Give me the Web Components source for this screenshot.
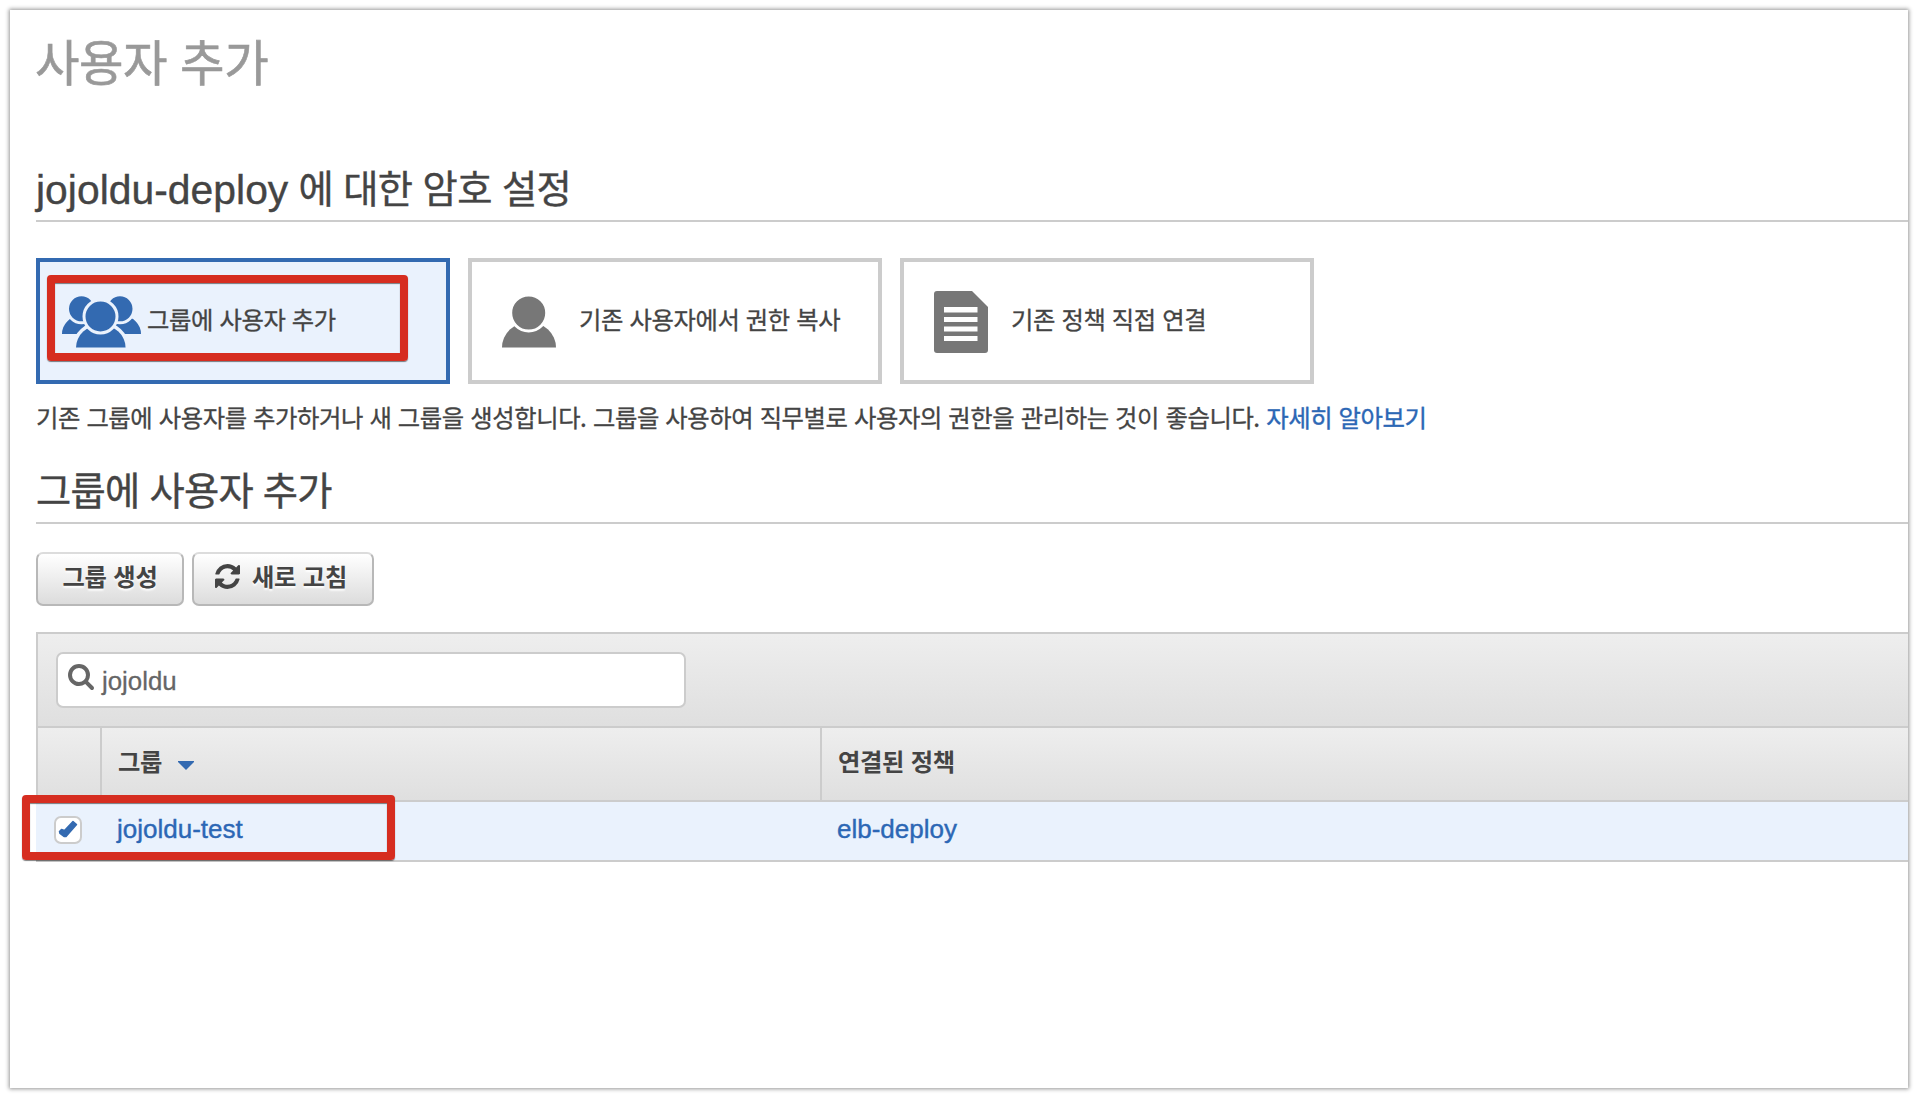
<!DOCTYPE html>
<html lang="ko">
<head>
<meta charset="utf-8">
<title>사용자 추가</title>
<style>
html,body{margin:0;width:1918px;height:1098px;overflow:hidden;background:#fff}
body{font-family:"Liberation Sans","Noto Sans CJK KR",sans-serif;color:#444;box-sizing:border-box;padding:10px}
</style>
</head>
<body>
<iam-page></iam-page>
<script>
const define=(name,html)=>customElements.define(name,class extends HTMLElement{
  constructor(){
    super();
    const t=document.createElement('template');
    t.innerHTML='<style>:host,*{box-sizing:border-box}'+html;
    this.attachShadow({mode:'open'}).append(t.content.cloneNode(true));
  }
});

define('iam-title',`
:host{display:block;font:48.4px/60px "Noto Sans CJK KR",sans-serif;letter-spacing:-.5px;margin-left:-1px;color:#999;white-space:nowrap;-webkit-text-stroke:.6px}
</style><slot></slot>`);

define('iam-heading',`
:host{display:block;height:60px;border-bottom:2px solid #ccc;font:38.3px/54px "Noto Sans CJK KR",sans-serif;letter-spacing:-.6px;color:#444;white-space:nowrap;-webkit-text-stroke:.4px}
::slotted(.latin){font-family:"Liberation Sans",sans-serif;font-size:40.8px;line-height:1;letter-spacing:.04px;vertical-align:-1px}
</style><slot></slot>`);

define('iam-option',`
:host{display:flex;align-items:center;width:414px;height:126px;border:4px solid #ccc;background:#fff;padding-left:30px;font:24.35px/36px "Noto Sans CJK KR",sans-serif;letter-spacing:-.4px;color:#444;white-space:nowrap;-webkit-text-stroke:.3px}
:host([selected]){border-color:#336ab1;background:#eaf2fd;padding-left:22px}
::slotted(svg){flex:none;display:block;margin-top:2px}
.label{margin:0 0 4px var(--gap,23px)}
</style><slot name="icon"></slot><span class="label"><slot></slot></span>`);

define('iam-link',`
:host{color:#2c67b5;-webkit-text-stroke:.4px}
</style><slot></slot>`);

define('iam-button',`
:host{display:flex;align-items:center;justify-content:center;height:54px;border:2px solid #b8b8b8;border-top-color:#dcdcdc;border-radius:7px;background:linear-gradient(#fff,#dcdcdc);font:bold 24.3px/36px "Noto Sans CJK KR",sans-serif;letter-spacing:-.2px;color:#444;text-shadow:0 2px 2px #fff;white-space:nowrap;padding:0 0 7px 0}
:host(.with-icon){padding-right:4px}
::slotted(svg){display:block;margin:1px 12px 0 0}
</style><slot name="icon"></slot><span><slot></slot></span>`);

define('iam-search',`
:host{display:flex;width:630px;height:56px;border:2px solid #ccc;border-radius:7px;background:#fff;padding:10px 0 0 10px;font:25.8px/35px "Liberation Sans",sans-serif;color:#666;-webkit-text-stroke:.3px}
svg{display:block;flex:none;width:26px;height:26px;margin-right:8px}
</style><svg viewBox="0 0 1664 1664"><path fill="#666" d="M1152 704q0-185-131.5-316.5t-316.5-131.5-316.5 131.5-131.5 316.5 131.5 316.5 316.5 131.5 316.5-131.5 131.5-316.5zm512 832q0 53-37.5 90.5t-90.5 37.5q-54 0-90-38l-343-342q-179 124-399 124-143 0-273.5-55.5t-225-150-150-225-55.5-273.5 55.5-273.5 150-225 225-150 273.5-55.5 273.5 55.5 225 150 150 225 55.5 273.5q0 220-124 399l343 343q37 37 37 90z"/></svg><span><slot></slot></span>`);

define('iam-checkbox',`
:host{display:block;width:28px;height:28px;border:2px solid #ccc;border-radius:7px;background:#fff}
svg{display:block}
</style><svg width="24" height="24" viewBox="0 0 24 24"><path d="M3.500 13.500L5.500 11.500L8.500 12.500L17 3.500L20.500 6.500L10 18.500L8 18.500L4 15.500z" fill="#336ab1" stroke="#336ab1" stroke-width="1.500" stroke-linejoin="round"/></svg>`);

define('iam-mark',`
:host{display:block;position:absolute;border:8px solid #d62d20;border-radius:4px;box-shadow:0 1px 1px rgba(0,0,0,.5),inset 0 1px 1px rgba(0,0,0,.5)}
</style>`);

define('iam-table',`
:host{display:block;border-top:2px solid #ccc;white-space:nowrap}
.tools,.head{border-left:2px solid #ccc;border-bottom:2px solid #ccc;background:linear-gradient(#eee,#dfdfdf)}
.tools{height:94px;padding:18px 0 0 18px}
.head,.row{display:grid;grid-template-columns:66px 720px 1fr}
.head{height:74px;grid-template-columns:64px 720px 1fr;font:bold 24.3px/66px "Noto Sans CJK KR",sans-serif;letter-spacing:-.3px;color:#444}
.head>div{display:flex;padding-left:16px}
.head>div:not(:last-child){border-right:2px solid #ccc}
.head svg{margin:33px 0 0 16px}
.row{height:60px;border-bottom:2px solid #ccc;background:#eaf2fd;font:26px/55px "Liberation Sans",sans-serif}
.row>div{padding-left:15px}
.row>div:first-child{padding:14px 0 0 18px}
</style>
<div class="tools"><slot name="search"></slot></div>
<div class="head"><div></div><div><slot name="h1"></slot><svg width="16" height="9" viewBox="0 0 16 9"><path d="M0 0h16v1L8 9 0 1z" fill="#336ab1"/></svg></div><div><slot name="h2"></slot></div></div>
<div class="row"><div><iam-checkbox></iam-checkbox></div><div><slot name="c1"></slot></div><div><slot name="c2"></slot></div></div>`);

define('iam-page',`
:host{display:block;position:relative;width:1898px;height:1078px;background:#fff;box-shadow:0 0 4px 1px rgba(0,0,0,.42);padding:20px 0 0 26px}
iam-title{height:60px;margin-bottom:70px}
.options{display:flex;gap:18px;margin-top:36px}
p{margin:15px 0 17px;font:24.35px/36px "Noto Sans CJK KR",sans-serif;letter-spacing:-.41px;color:#444;white-space:nowrap;-webkit-text-stroke:.3px}
.buttons{display:flex;gap:8px;margin:28px 0 26px}
</style>
<iam-title>사용자 추가</iam-title>
<iam-heading style="height:62px"><span class="latin">jojoldu-deploy</span> 에 대한 암호 설정</iam-heading>
<div class="options">
<iam-option selected style="--gap:6px"><svg slot="icon" width="79" height="52" viewBox="0 0 79 52"><g fill="#336ab1"><path d="M0 38A17 17.500 0 0 1 34 38zM45 38A17 17.500 0 0 1 79 38z"/><g stroke="#eaf2fd" stroke-width="3"><circle cx="19.500" cy="12.800" r="14"/><circle cx="58" cy="12.800" r="14"/></g><path d="M14 51.500A24.800 22.500 0 0 1 63.600 51.500z" stroke="#eaf2fd" stroke-width="7"/><path d="M14 51.500A24.800 22.500 0 0 1 63.600 51.500z"/><circle cx="38.500" cy="20.500" r="16.500" stroke="#eaf2fd" stroke-width="3"/></g></svg>그룹에 사용자 추가</iam-option>
<iam-option><svg slot="icon" width="54" height="52" viewBox="0 0 54 52"><path d="M0 51.500A27 25.500 0 0 1 54 51.500z" fill="#777"/><circle cx="26.700" cy="17" r="18" fill="#777" stroke="#fff" stroke-width="3"/></svg>기존 사용자에서 권한 복사</iam-option>
<iam-option><svg slot="icon" width="54" height="62" viewBox="0 0 54 62"><path d="M3 0H38L54 16V59a3 3 0 0 1-3 3H3a3 3 0 0 1-3-3V3a3 3 0 0 1 3-3z" fill="#777"/><path d="M10 16h33.500v5.500H10zM10 26h33.500v5H10zM10 35.500h33.500v5H10zM10 45h33.500v5H10z" fill="#fff"/></svg>기존 정책 직접 연결</iam-option>
</div>
<p>기존 그룹에 사용자를 추가하거나 새 그룹을 생성합니다. 그룹을 사용하여 직무별로 사용자의 권한을 관리하는 것이 좋습니다. <iam-link>자세히 알아보기</iam-link></p>
<iam-heading style="height:72px;padding-top:10px;letter-spacing:-.75px">그룹에 사용자 추가</iam-heading>
<div class="buttons">
<iam-button style="width:148px">그룹 생성</iam-button>
<iam-button class="with-icon" style="width:182px"><svg slot="icon" width="25" height="25" viewBox="0 0 1536 1536"><path fill="#444" d="M1511 928q0 5-1 7-64 268-268 434.500t-478 166.500q-146 0-282.500-55t-243.500-157l-129 129q-19 19-45 19t-45-19-19-45v-448q0-26 19-45t45-19h448q26 0 45 19t19 45-19 45l-137 137q71 66 161 102t187 36q134 0 250-65t186-179q11-17 53-117 8-23 30-23h192q13 0 22.500 9.500t9.500 22.500zm25-800v448q0 26-19 45t-45 19h-448q-26 0-45-19t-19-45 19-45l138-138q-148-137-349-137-134 0-250 65t-186 179q-11 17-53 117-8 23-30 23h-199q-13 0-22.500-9.500t-9.500-22.500v-7q65-268 270-434.500t480-166.500q146 0 284 55.500t245 156.500l130-129q19-19 45-19t45 19 19 45z"/></svg>새로 고침</iam-button>
</div>
<iam-table>
<iam-search slot="search">jojoldu</iam-search>
<span slot="h1">그룹</span><span slot="h2">연결된 정책</span>
<iam-link slot="c1">jojoldu-test</iam-link><iam-link slot="c2">elb-deploy</iam-link>
</iam-table>
<iam-mark style="left:37px;top:265px;width:361px;height:86px"></iam-mark>
<iam-mark style="left:12px;top:785px;width:373px;height:65px"></iam-mark>`);
</script>
</body>
</html>
